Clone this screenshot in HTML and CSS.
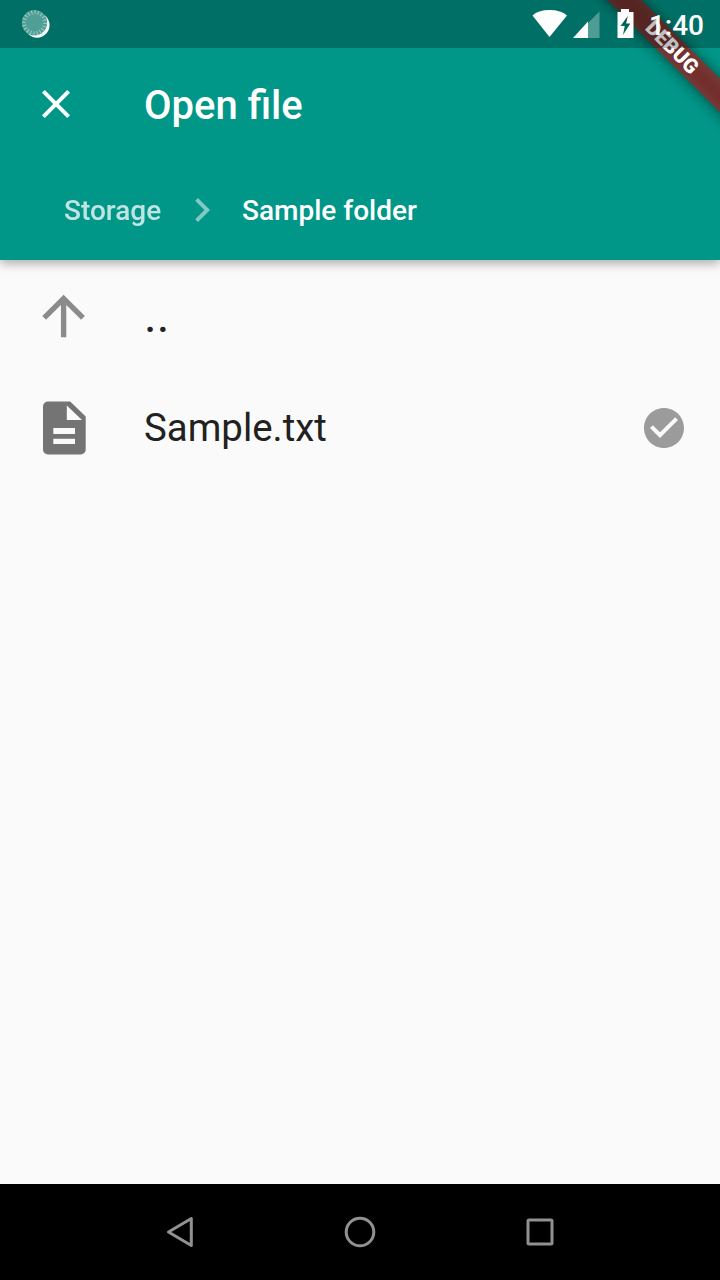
FILE: index.html
```html
<!DOCTYPE html>
<html lang="en">
<head>
<meta charset="utf-8">
<title>Open file</title>
<link rel="stylesheet" href="styles.css">
</head>
<body>
<div class="screen">
  <header class="header">
    <div class="app-bar">
      <svg class="close" viewBox="0 0 24 24"><path d="M19 6.41 17.59 5 12 10.59 6.41 5 5 6.41 10.59 12 5 17.59 6.41 19 12 13.41 17.59 19 19 17.59 13.41 12z"/></svg>
      <h1 class="title">Open file</h1>
    </div>
    <nav class="crumbs">
      <span class="crumb parent">Storage</span>
      <svg class="chevron" viewBox="0 0 24 24"><path d="M10 6 8.59 7.41 13.17 12l-4.58 4.59L10 18l6-6z"/></svg>
      <span class="crumb">Sample folder</span>
    </nav>
  </header>
  <main class="list">
    <div class="row">
      <svg class="lead up" viewBox="0.15 0 24 24"><path d="M4 12l1.41 1.41L11 7.83V20h2V7.83l5.58 5.59L20 12l-8-8z"/></svg>
      <span class="name parent-dir">..</span>
    </div>
    <div class="row">
      <svg class="lead doc" viewBox="0 0 64 64"><path fill-rule="evenodd" d="M16 5.500H38.200L53.700 20.500V53.500a5 5 0 0 1-5 5H16a5 5 0 0 1-5-5V10.500a5 5 0 0 1 5-5zM34.800 9.500V24H50zM21.300 32V38H43V32zM21.300 42.700V48H43V42.700z"/></svg>
      <span class="name">Sample.txt</span>
      <svg class="check" viewBox="0 0 24 24"><path d="M12 2C6.480 2 2 6.480 2 12s4.480 10 10 10 10-4.480 10-10S17.520 2 12 2zm-2 15l-5-5 1.410-1.410L10 14.170l7.590-7.590L19 8l-9 9z"/></svg>
    </div>
  </main>
  <footer class="navigation">
    <svg viewBox="0 0 48 48"><path d="M12.500 24 35.300 10.500V37.500z"/></svg>
    <svg viewBox="0 0 48 48"><circle cx="24" cy="24" r="13.800"/></svg>
    <svg viewBox="0 0 48 48"><rect x="12" y="12" width="24" height="24" rx="1"/></svg>
  </footer>
  <svg class="banner" viewBox="0 0 160 160">
    <defs><filter id="soft" x="-30%" y="-30%" width="160%" height="160%"><feGaussianBlur stdDeviation="7"/></filter></defs>
    <path class="banner-shadow" filter="url(#soft)" d="M17-30H51L190 109V143z"/>
    <path class="banner-band" d="M47.500 0H81.500L160 78.500V112.500z"/>
    <text class="banner-text" transform="translate(112.200 47.200) rotate(45)" x="0" y="7">DEBUG</text>
  </svg>
  <div class="status-bar">
    <svg class="spinner" viewBox="0 0 32 32">
      <circle cx="17" cy="15.200" r="12.500" fill="#fff"/>
      <circle cx="14.500" cy="12.800" r="12.700" fill="#4f9f96"/>
      <circle cx="14.500" cy="12.800" r="10.500" class="ticks" pathLength="60"/>
    </svg>
    <svg class="signals" viewBox="0 0 112 48">
      <path fill="#fff" d="M4.500 15.500Q10 10 21.500 10T39 15.500L21.500 37z"/>
      <path fill="#4f9c94" d="M71.500 11.500V38H60V23z"/>
      <path fill="#fff" d="M60 21.500V38H45z"/>
      <path fill="#fff" fill-rule="evenodd" d="M93 9h8v3h4.500v26h-16V12H93zm6.800 7-7.300 10h4.200l-1.700 9 7.300-11.500h-4.200z"/>
    </svg>
    <span class="clock">1:40</span>
  </div>
</div>
</body>
</html>
```
FILE: styles.css
```css
* { box-sizing: border-box; }
body { margin: 0; font-family: Roboto, sans-serif; }
.screen {
  position: relative;
  width: 720px;
  height: 1280px;
  display: flex;
  flex-direction: column;
  overflow: hidden;
  background: #fafafa;
}
.screen svg { display: block; flex: none; }
.header {
  height: 260px;
  padding-top: 48px;
  background: #009688;
  color: #fff;
  box-shadow: 0 4px 10px rgba(0,0,0,.22), 0 1px 10px rgba(0,0,0,.14);
}
.app-bar { display: flex; align-items: center; height: 112px; padding-left: 32px; }
.close { width: 48px; height: 48px; fill: #fff; }
.title { margin: 4px 0 0 64px; font-size: 40px; font-weight: 500; line-height: 48px; }
.crumbs { display: flex; align-items: center; gap: 16px; height: 100px; padding-left: 64px; }
.crumb { padding-top: 2px; font-size: 28px; font-weight: 500; line-height: 34px; }
.parent { width: 98px; opacity: .75; }
.chevron { width: 48px; height: 48px; fill: #fff; opacity: .5; }
.list { flex: 1; }
.row { display: flex; align-items: center; height: 112px; padding: 0 32px; }
.up { width: 64px; height: 64px; fill: #8b8b8b; }
.doc { width: 64px; height: 64px; fill: #747474; }
.row .lead { margin-right: 48px; }
.name { flex: 1; font-size: 38.4px; line-height: 46px; color: #212121; }
.parent-dir { font-size: 48px; line-height: 56px; }
.check { width: 48px; height: 48px; fill: #9b9b9b; }
.navigation {
  height: 96px;
  display: flex;
  align-items: center;
  justify-content: center;
  gap: 132px;
  background: #000;
}
.navigation svg {
  width: 48px;
  height: 48px;
  fill: none;
  stroke: #919191;
  stroke-width: 3;
  stroke-linejoin: round;
}
.banner { position: absolute; top: 0; right: 0; width: 160px; height: 160px; }
.banner-shadow { fill: rgba(0,0,0,.5); }
.banner-band { fill: rgba(183,28,28,.627); }
.banner-text { fill: #fff; font-size: 20.4px; font-weight: 900; text-anchor: middle; }
.status-bar {
  position: absolute;
  top: 0;
  left: 0;
  width: 100%;
  height: 48px;
  display: flex;
  align-items: center;
  padding: 0 16px 0 20px;
  background: rgba(0,0,0,.25);
  color: #fff;
}
.spinner { width: 32px; height: 32px; margin-top: 3px; }
.ticks { fill: none; stroke: #9bc8c3; stroke-width: 4; stroke-dasharray: 1 2; }
.signals { width: 112px; height: 48px; margin-left: auto; }
.clock { margin: 4px 0 0 9px; font-size: 28px; font-weight: 500; line-height: 34px; }
```
